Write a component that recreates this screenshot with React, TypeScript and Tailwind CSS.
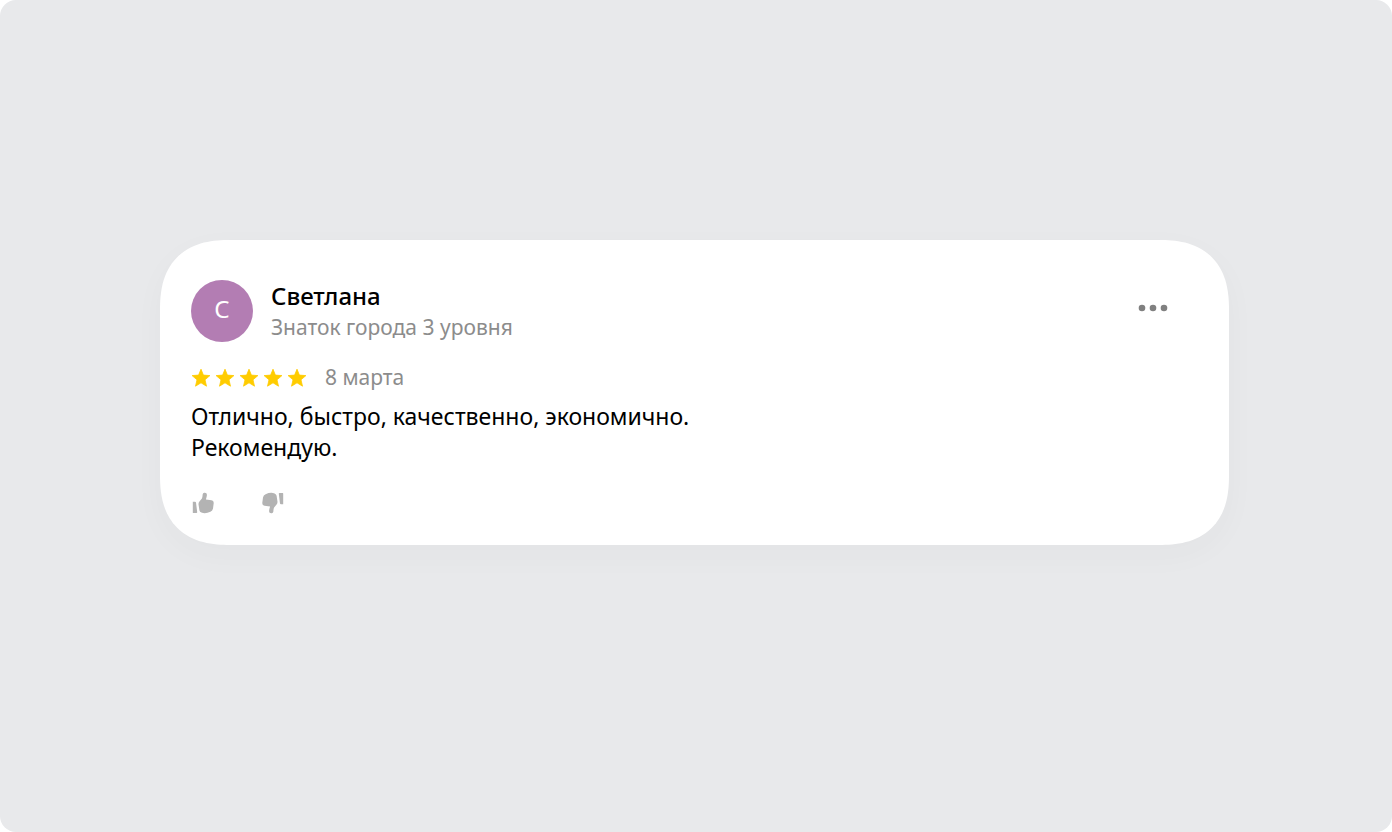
function Star() {
  return (
    <svg viewBox="0 0 20 20" className="size-5" fill="#fc0" aria-hidden="true">
      <path
        d="M10 1.2 12.4 7.1 18.9 7.6 14 11.8 15.5 18.2 10 14.8 4.5 18.2 6 11.8 1.1 7.6 7.6 7.1Z"
        stroke="#fc0"
        strokeWidth="0.8"
        strokeLinejoin="round"
      />
    </svg>
  );
}

function ThumbUp() {
  return (
    <svg viewBox="0 0 24 24" className="size-6" fill="#b3b3b3" aria-hidden="true">
      <path d="M1.8 10.7 H4 Q4.8 10.7 5 11.5 L6.2 21.2 Q6.3 22 5.5 22 H2.3 Q1.8 22 1.8 21.5 V10.7Z" />
      <path d="M13.2 1.7 Q16.2 1.3 15.9 4.3 Q15.6 6.6 14.9 8.6 L20.5 9.3 Q22.9 9.8 22.7 12.2 L22 17.5 Q21.6 19.8 19.4 20.8 Q14.5 23 10.4 21.6 Q8.7 21 8.4 19.2 L7.5 13.3 Q7.4 11.6 8.6 10.2 L10.9 7.4 Q11.5 6.4 11.7 3.2 Q11.9 1.9 13.2 1.7Z" />
    </svg>
  );
}

export default function App() {
  return (
    <div className="bg-white font-['Noto_Sans','Open_Sans',sans-serif]">
      <main className="min-h-screen rounded-2xl bg-[#e8e9eb] px-40 pt-60 pb-20">
        <article className="mr-[3px] flex flex-col rounded-[58px] bg-white pt-10 pr-8 pb-[30px] pl-[31px] shadow-[0_10px_32px_rgba(60,70,60,0.03)] supports-[corner-shape:squircle]:rounded-[70px] supports-[corner-shape:squircle]:[corner-shape:superellipse(1.3)]">
          <header className="flex items-start">
            <div className="flex size-[62px] shrink-0 items-center justify-center rounded-full bg-[#b37db3] pb-1 text-2xl text-white">
              С
            </div>
            <div className="ml-[18px] grow">
              <h1 className="text-2xl leading-8 font-medium text-black">Светлана</h1>
              <p className="text-[21px] leading-[30px] text-[#8c8c8c]">Знаток города 3 уровня</p>
            </div>
            <button type="button" aria-label="Ещё" className="mt-4 mr-6 p-1">
              <svg viewBox="0 0 32 16" className="h-4 w-8" fill="#808080" aria-hidden="true">
                <circle cx="5" cy="8" r="3.3" />
                <circle cx="16" cy="8" r="3.3" />
                <circle cx="27" cy="8" r="3.3" />
              </svg>
            </button>
          </header>
          <div className="mt-5 flex items-center">
            <div className="flex gap-1 pt-0.5" role="img" aria-label="Оценка 5 из 5">
              <Star />
              <Star />
              <Star />
              <Star />
              <Star />
            </div>
            <time className="ml-[18px] text-[21px] leading-[30px] text-[#8c8c8c]">8 марта</time>
          </div>
          <p className="mt-[9px] text-[23px] leading-[31px] text-black">
            Отлично, быстро, качественно, экономично.
            <br />
            Рекомендую.
          </p>
          <footer className="mt-7 flex gap-[46px]">
            <button type="button" aria-label="Нравится">
              <ThumbUp />
            </button>
            <button type="button" aria-label="Не нравится" className="rotate-180">
              <ThumbUp />
            </button>
          </footer>
        </article>
      </main>
    </div>
  );
}
